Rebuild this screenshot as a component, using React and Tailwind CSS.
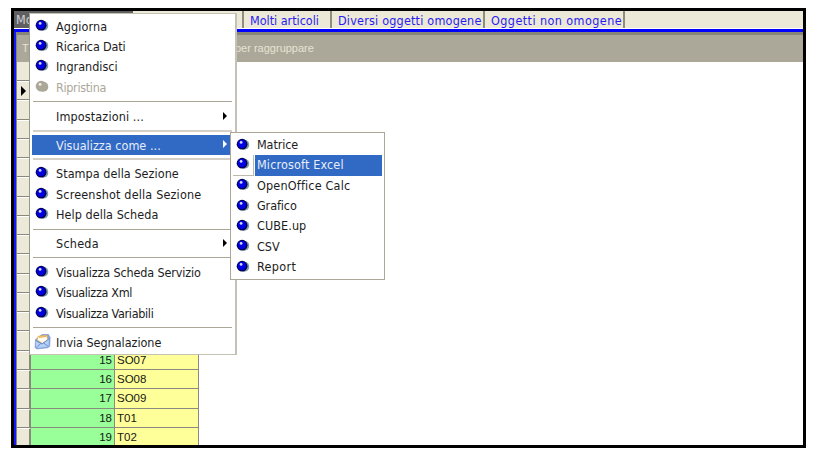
import React from 'react';

const TAHOMA = "font-['DejaVu_Sans_Condensed','DejaVu_Sans',sans-serif] [font-stretch:condensed]";

function Bullet({ disabled }) {
  const dark = disabled ? '#aca899' : '#000048';
  const body = disabled ? '#aca899' : '#0000e0';
  return (
    <svg width="14" height="13" viewBox="0 0 14 13" className="block shrink-0">
      <circle cx="8.3" cy="6.8" r="5" fill={disabled ? '#aca899' : '#7f9daa'} />
      <circle cx="6.1" cy="6.2" r="5.4" fill={dark} />
      <circle cx="5.9" cy="6" r="4.3" fill={body} />
      <circle cx="5.1" cy="4.4" r="1.4" fill={disabled ? '#f0efe8' : '#d5d9ff'} />
    </svg>
  );
}

function Envelope() {
  return (
    <svg width="17" height="17" viewBox="0 0 16 17" className="block shrink-0">
      <path d="M1 6.5 L7.5 1.5 L14 1.5 L15.6 4.5 L15.2 13.4 L13 14.8 L2 16 L0.6 14.5Z" fill="#86a7da" stroke="#6f8fc4" strokeWidth=".6" />
      <path d="M2.5 7 L3.6 3.4 L12 2.2 L13.4 6.5 L8 10.4Z" fill="#fffdf3" stroke="#e0ab55" strokeWidth=".9" />
      <path d="M1 7.5 L7.5 11 L14.4 6 L14 13.5 L2 15.2Z" fill="#b4d0f8" />
      <path d="M1 7.5 L7.5 11 L14.4 6 M2 15 L6.2 10.4 M13.8 13.6 L9 9.9" fill="none" stroke="#5f89cc" strokeWidth=".9" />
      <path d="M4.4 4.4 L11.5 3.4" stroke="#f0b04a" strokeWidth="1.2" />
    </svg>
  );
}

function Arrow({ light }) {
  return (
    <svg width="4" height="8" viewBox="0 0 4 8" className="block">
      <path d="M0 0 L4 4 L0 8Z" fill={light ? '#ffffff' : '#000000'} />
    </svg>
  );
}

function Separator({ light }) {
  return (
    <div className="flex h-[8.6px] items-center pl-px pr-[3px]">
      <div className={light ? 'h-[2px] w-full bg-[#d4d0c8]' : 'h-px w-full bg-[#aca899]'} />
    </div>
  );
}

function Item({ label, track = '', icon = 'bullet', arrow, selected, disabled }) {
  const tone = selected ? 'bg-[#316ac5] text-[#e8edf8]' : disabled ? 'text-[#aca899]' : 'text-[#1c1c1c]';
  return (
    <div className={`mr-[3px] flex h-[20.33px] items-center ${tone}`}>
      <div className="flex w-[24px] shrink-0 items-center pl-[3px]">
        {icon === 'bullet' && <div className="pb-[2px]"><Bullet disabled={disabled} /></div>}
        {icon === 'mail' && <div className="-ml-px"><Envelope /></div>}
      </div>
      <span className={`flex-1 whitespace-nowrap pt-px leading-[20px] ${track}`}>{label}</span>
      {arrow && <div className="pb-px pr-[5px]"><Arrow light={selected} /></div>}
    </div>
  );
}

const SUBMENU = [
  { label: 'Matrice', track: 'tracking-[-0.1px]' },
  { label: 'Microsoft Excel', track: 'tracking-[0.15px]', active: true },
  { label: 'OpenOffice Calc', track: 'tracking-[0.18px]' },
  { label: 'Grafico', track: 'tracking-[-0.1px]' },
  { label: 'CUBE.up', track: 'tracking-[0.08px]' },
  { label: 'CSV', track: '' },
  { label: 'Report', track: 'tracking-[0.35px]' },
];

function SubItem({ label, track, active }) {
  return (
    <div className="flex h-[20.33px] items-stretch">
      <div className={`flex w-[21px] shrink-0 items-center pb-[2px] pl-[3px] ${active ? 'border-b border-r border-[#bdb9ab]' : ''}`}>
        <Bullet />
      </div>
      <div className={`ml-px flex flex-1 items-center whitespace-nowrap pl-[2px] leading-[20px] ${track} ${active ? 'bg-[#316ac5] text-[#e8edf8]' : 'text-[#1c1c1c]'}`}>{label}</div>
    </div>
  );
}

const ROWS = [
  ...Array.from({ length: 14 }, () => ['', '']),
  ['15', 'SO07'], ['16', 'SO08'], ['17', 'SO09'], ['18', 'T01'], ['19', 'T02'],
];

function Tabs() {
  return (
    <div className="flex h-[17px] shrink-0 bg-[#ece9d8] text-[12.5px] leading-[20px] text-[#2a1cf0]">
      <div className="w-[119px] overflow-hidden bg-[#5f5f62] pl-[2px] leading-[18px] text-[#d0d0d4]">Mo</div>
      <div className="w-[111px] border-r-2 border-[#8f8c80]" />
      <div className="w-[88px] whitespace-nowrap border-r-2 border-[#8f8c80] pl-[6px] tracking-[-0.02px]">Molti articoli</div>
      <div className="w-[153px] overflow-hidden whitespace-nowrap border-r-2 border-[#8f8c80] pl-[6px] tracking-[0.2px]">Diversi oggetti omogene</div>
      <div className="w-[140px] overflow-hidden whitespace-nowrap border-r-2 border-[#8f8c80] pl-[6px] tracking-[0.42px]">Oggetti non omogene</div>
    </div>
  );
}

export default function App() {
  return (
    <div className={`h-[461px] w-[818px] overflow-hidden bg-white pl-[11px] pt-[8px] text-[12.5px] ${TAHOMA}`}>
      <div className="relative flex h-[440px] w-[795px] flex-col overflow-hidden border-[3px] border-black bg-white">
        <Tabs />
        <div className="mt-px h-[3px] shrink-0 bg-[#0000ff]" />
        <div className="flex min-h-0 flex-1">
          <div className="w-[2px] shrink-0 bg-[#1616ff]" />
          <div className="w-px shrink-0 bg-[#8a877b]" />
          <div className="flex min-w-0 flex-1 flex-col overflow-hidden">
            <div className="flex h-[30px] shrink-0 items-center justify-between border-t-[3px] border-[#87857a] bg-[#aca899] pl-[5px] font-['Liberation_Sans',Arial,sans-serif] text-[11px] text-[#e6e3d4]">
              <span>T</span>
              <span className="w-[568px] whitespace-nowrap">per raggruppare</span>
            </div>
            <div className="h-[19px] w-[13px] shrink-0 border-b border-r border-[#8a877b] bg-[#ece9d8]" />
            {ROWS.map(([n, code], i) => (
              <div key={i} className="flex h-[19.27px] shrink-0 font-['Liberation_Sans',Arial,sans-serif] text-[11.5px] leading-[19px] text-[#161616]">
                <div className="flex w-[14px] items-center justify-center border-b border-r-2 border-t border-[#8a877b] border-t-white bg-[#ece9d8]">
                  {i === 0 && <svg width="5" height="10" viewBox="0 0 5 10"><path d="M0 0 L5 5 L0 10Z" fill="#000" /></svg>}
                </div>
                <div className="w-[84px] border-b border-r border-[#8a8a80] bg-[#99ff99] pr-[2px] text-right">{n}</div>
                <div className="w-[84px] border-b border-r border-[#8a8a80] bg-[#ffff99] pl-[2px]">{code}</div>
              </div>
            ))}
          </div>
        </div>

        <div className="absolute left-[15px] top-[2px] h-[342px] w-[208px] border border-r-2 border-[#c4c1b5] border-l-[#9a978b] bg-white pl-[2px] pt-[2px]">
          <Item label="Aggiorna" track="tracking-[0.12px]" />
          <Item label="Ricarica Dati" track="tracking-[-0.15px]" />
          <Item label="Ingrandisci" />
          <Item label="Ripristina" track="tracking-[-0.32px]" disabled />
          <Separator />
          <Item label="Impostazioni ..." track="tracking-[0.13px]" icon="none" arrow />
          <Separator light />
          <Item label="Visualizza come ..." track="tracking-[0.03px]" icon="none" arrow selected />
          <Separator light />
          <Item label="Stampa della Sezione" track="tracking-[0.05px]" />
          <Item label="Screenshot della Sezione" track="tracking-[0.17px]" />
          <Item label="Help della Scheda" track="tracking-[0.06px]" />
          <Separator />
          <Item label="Scheda" track="tracking-[0.25px]" icon="none" arrow />
          <Separator />
          <Item label="Visualizza Scheda Servizio" track="tracking-[-0.14px]" />
          <Item label="Visualizza Xml" track="tracking-[-0.33px]" />
          <Item label="Visualizza Variabili" track="tracking-[-0.31px]" />
          <Separator />
          <Item label="Invia Segnalazione" track="tracking-[-0.03px]" icon="mail" />
        </div>

        <div className="absolute left-[216px] top-[121px] h-[148px] w-[155px] border border-[#aca899] bg-white p-[2px]">
          {SUBMENU.map((item) => (
            <SubItem key={item.label} {...item} />
          ))}
        </div>
      </div>
    </div>
  );
}
